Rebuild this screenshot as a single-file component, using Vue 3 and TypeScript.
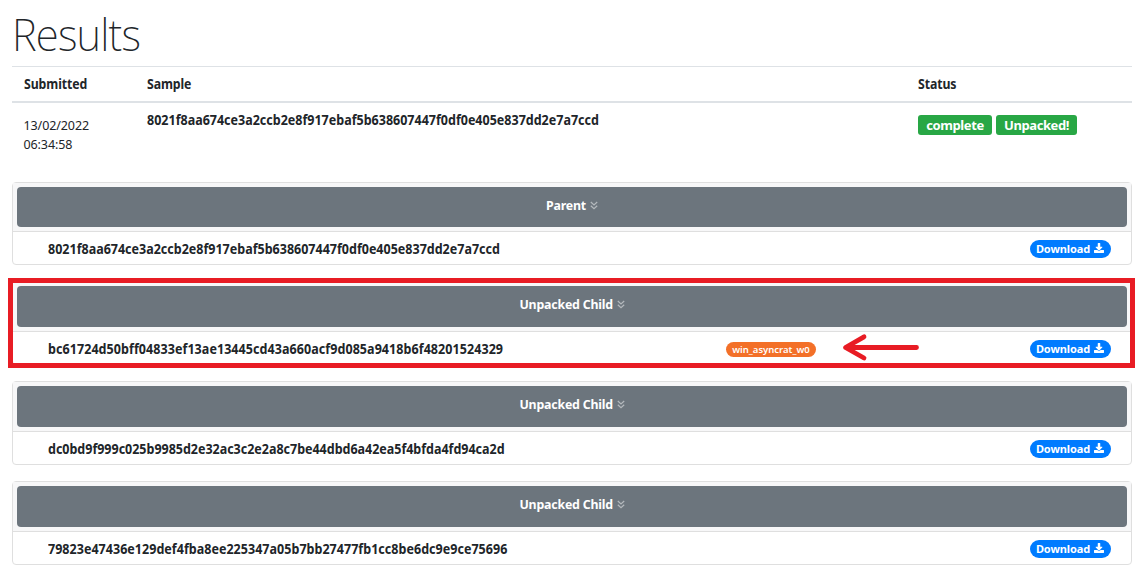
<script setup lang="ts">
interface Sample {
  title: string
  hash: string
  kind: string
  tag?: string
}

const samples: Sample[] = [
  { title: 'Parent', kind: 'parent', hash: '8021f8aa674ce3a2ccb2e8f917ebaf5b638607447f0df0e405e837dd2e7a7ccd' },
  { title: 'Unpacked Child', kind: 'marked', hash: 'bc61724d50bff04833ef13ae13445cd43a660acf9d085a9418b6f48201524329', tag: 'win_asyncrat_w0' },
  { title: 'Unpacked Child', kind: 'child', hash: 'dc0bd9f999c025b9985d2e32ac3c2e2a8c7be44dbd6a42ea5f4bfda4fd94ca2d' },
  { title: 'Unpacked Child', kind: 'child', hash: '79823e47436e129def4fba8ee225347a05b7bb27477fb1cc8be6dc9e9ce75696' },
]
</script>

<template>
  <main class="page">
    <h1>Results</h1>
    <div class="row head">
      <div>Submitted</div>
      <div>Sample</div>
      <div>Status</div>
    </div>
    <div class="row entry">
      <div class="date">13/02/2022<br />06:34:58</div>
      <div class="hash">{{ samples[0].hash }}</div>
      <div class="status"><span class="badge complete">complete</span><span class="badge unpacked">Unpacked!</span></div>
    </div>
    <section class="cards">
      <article v-for="(s, i) in samples" :key="i" class="card" :class="s.kind">
        <div class="top">
          <div class="bar">
            <span class="title">{{ s.title }}</span>
            <svg class="chev" width="8" height="9" viewBox="0 0 8 9"><path d="M.8 1 4 4 7.2 1M.8 4.7 4 7.7 7.2 4.7" /></svg>
          </div>
        </div>
        <div class="body">
          <span class="hash">{{ s.hash }}</span>
          <span v-if="s.tag" class="tag">{{ s.tag }}</span>
          <button class="dl" type="button">
            <span>Download</span>
            <svg width="11" height="11" viewBox="0 0 512 512"><path d="M216 0h80c13 0 24 11 24 24v168h88c18 0 27 21 14 34L270 378c-8 8-20 8-28 0L90 226c-13-13-4-34 14-34h88V24c0-13 11-24 24-24zm296 376v112c0 13-11 24-24 24H24c-13 0-24-11-24-24V376c0-13 11-24 24-24h147l49 49c20 20 52 20 72 0l49-49h147c13 0 24 11 24 24z" /></svg>
          </button>
        </div>
        <div v-if="s.tag" class="outline"></div>
        <svg v-if="s.tag" class="arrow" width="80" height="32" viewBox="0 0 80 32"><path d="M74.500 15.500H4M22 4.800 3.500 15.500 22 26" /></svg>
      </article>
    </section>
  </main>
</template>

<style>
body {
  background: #fff;
}
</style>

<style scoped>
.page {
  box-sizing: border-box;
  height: 580px;
  padding: 0 10px 0 12px;
  overflow: hidden;
  color: #212529;
  font-family: 'Noto Sans', 'Open Sans', sans-serif;
  font-size: 13.5px;
}
h1 {
  height: 66px;
  margin: 0;
  font-size: 45px;
  font-weight: 250;
  line-height: 68px;
  letter-spacing: -0.9px;
  transform: scaleX(0.935);
  transform-origin: left;
}
.row {
  display: grid;
  grid-template-columns: 123px 771.500px 1fr;
  padding-left: 11.500px;
}
.head {
  height: 34px;
  border-top: 1px solid #dee2e6;
  border-bottom: 2px solid #dee2e6;
  font-size: 13.5px;
  font-weight: 700;
  line-height: 35px;
  letter-spacing: -0.1px;
}
.head div {
  transform: scaleX(0.91);
  transform-origin: left;
}
.entry {
  height: 79px;
}
.date {
  padding-top: 13px;
  font-size: 12.5px;
  font-weight: 370;
  line-height: 19px;
  letter-spacing: -0.1px;
}
.hash {
  font-size: 13.5px;
  font-weight: 700;
  white-space: nowrap;
  transform: scaleX(0.927);
  transform-origin: left;
}
.marked .hash {
  letter-spacing: 0.07px;
}
.child .hash {
  letter-spacing: -0.02px;
}
.child:last-child .hash {
  letter-spacing: 0.03px;
}
.entry .hash {
  padding-top: 7px;
  line-height: 20px;
}
.status {
  display: flex;
  gap: 4px;
  padding-top: 12px;
}
.badge {
  height: 20px;
  border-radius: 3px;
  background: #28a745;
  color: #fff;
  font-size: 13px;
  font-weight: 700;
  line-height: 20px;
  letter-spacing: -0.4px;
  text-align: center;
}
.complete {
  width: 74px;
}
.unpacked {
  width: 81px;
}
.cards {
  display: flex;
  flex-direction: column;
  gap: 16px;
}
.card {
  box-sizing: border-box;
  position: relative;
  height: 84px;
  border: 1px solid #dfdfdf;
  border-radius: 4px;
}
.parent {
  height: 83px;
}
.top {
  padding: 4px;
  border-bottom: 1px solid #dfdfdf;
  background: #f7f7f8;
}
.bar {
  display: flex;
  justify-content: center;
  align-items: center;
  gap: 4px;
  box-sizing: border-box;
  height: 41px;
  padding-bottom: 5px;
  border-radius: 4px;
  background: #6c757d;
  color: #fff;
  font-size: 13px;
  font-weight: 700;
  letter-spacing: -0.2px;
}
.title {
  margin: 0 -2.5px;
  transform: scaleX(0.95);
}
.parent .title {
  margin: 0 -1px;
}
.parent .bar {
  height: 40px;
  padding-bottom: 4px;
}
.chev path {
  fill: none;
  stroke: #b4b9bd;
  stroke-width: 1.2;
}
.body {
  display: grid;
  grid-template-columns: 678px 1fr auto;
  align-items: center;
  height: 33px;
  padding: 0 20px 0 35px;
}
.tag {
  width: 90px;
  height: 15px;
  border-radius: 8px;
  background: #f37028;
  color: #fff;
  font-size: 9.5px;
  font-weight: 600;
  line-height: 16px;
  text-align: center;
}
.marked .tag {
  margin-top: 1px;
}
.dl {
  grid-column: 3;
  display: flex;
  align-items: center;
  justify-content: center;
  gap: 4px;
  width: 81px;
  height: 18px;
  padding: 0 1px 0 0;
  border: 0;
  border-radius: 9px;
  background: #007bff;
  color: #fff;
  font: 700 11px/18px 'Noto Sans', sans-serif;
  letter-spacing: -0.1px;
}
.dl svg {
  width: 10px;
  height: 10px;
  margin-top: -2px;
}
.dl path {
  fill: #fff;
}
.outline {
  position: absolute;
  inset: -4px -4px -4px -5px;
  border: 5px solid #e81c24;
}
.arrow {
  position: absolute;
  left: 829px;
  top: 50px;
}
.arrow path {
  fill: none;
  stroke: #e81c24;
  stroke-width: 4.8;
  stroke-linecap: round;
  stroke-linejoin: round;
}
</style>
